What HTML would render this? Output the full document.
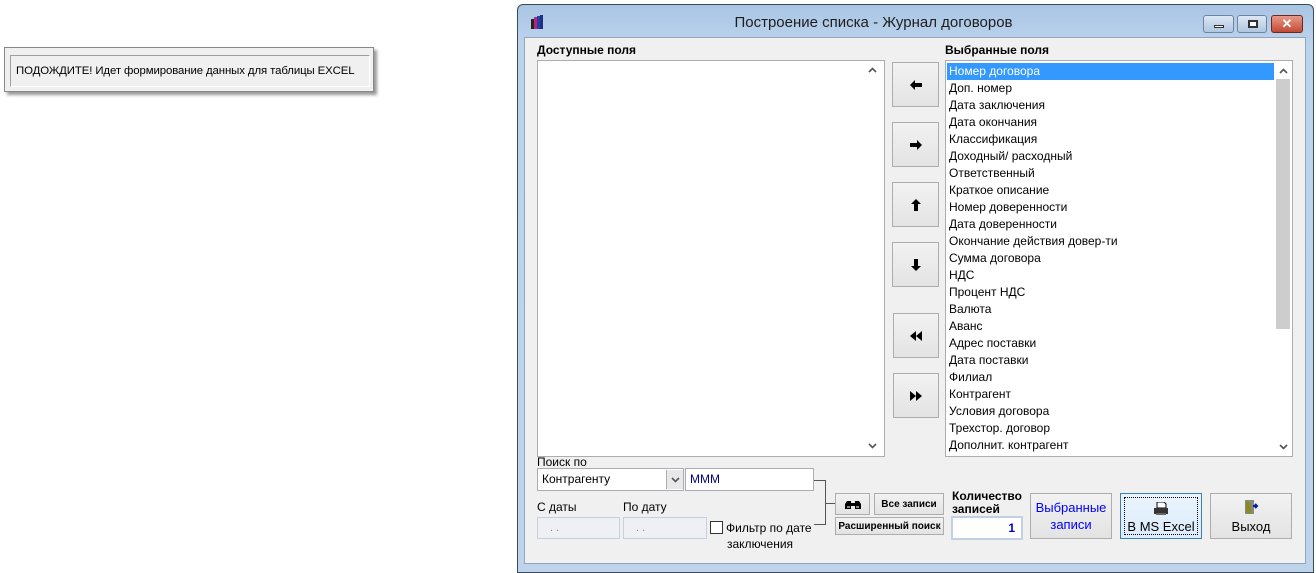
<!DOCTYPE html>
<html><head><meta charset="utf-8"><style>
*{box-sizing:border-box;margin:0;padding:0}
body{width:1316px;height:573px;background:#fff;position:relative;overflow:hidden;font-family:"Liberation Sans",Arial,sans-serif;font-size:12px;color:#000}
.a{position:absolute}
.btn{position:absolute;background:linear-gradient(#f2f2f2,#e3e3e3);border:1px solid #adadad;display:flex;align-items:center;justify-content:center;flex-direction:column;text-align:center}
.lst{position:absolute;background:#fff;border:1px solid #abadb3}
.row{position:absolute;left:3px;height:17px;line-height:17px;font-size:12px;white-space:nowrap}
.inp{position:absolute;background:#fff;border:1px solid #abadb3;padding-left:4px;line-height:20px}
.dis{position:absolute;background:#eef0f3;border:1px solid #c3d0dd;color:#888;line-height:20px;padding-left:12px;font-size:11px}
</style></head><body>

<div class="a" style="left:4px;top:47px;width:370px;height:45px;background:#f0f0f0;border:1px solid #888;box-shadow:3px 3px 3px #999"></div>
<div class="a" style="left:10px;top:55px;width:360px;height:32px;border-top:1px solid #a0a0a0;border-left:1px solid #a0a0a0;border-right:1px solid #fff;border-bottom:1px solid #fff"></div>
<div class="a" style="left:16px;top:65px;font-size:11.4px;letter-spacing:-0.1px">ПОДОЖДИТЕ! Идет формирование данных для таблицы EXCEL</div>

<div class="a" style="left:517px;top:4px;width:797px;height:569px;background:linear-gradient(#a9c5e4,#bcd3ec 40px,#bdd4ec);border:1px solid #3c4b5b;border-radius:6px 6px 0 0"></div>
<div class="a" style="left:524px;top:37px;width:782px;height:527px;background:#f0f0f0;border:1px solid #8ea5bd"></div>
<div class="a" style="left:530px;top:14px;width:14px;height:16px">
<svg width="14" height="16"><rect x="1" y="5" width="3" height="10" fill="#222"/><rect x="4" y="3" width="3" height="12" fill="#c02070"/><rect x="7" y="2" width="3" height="13" fill="#2040b0"/><rect x="10" y="1" width="3" height="14" fill="#203080"/></svg></div>
<div class="a" style="left:517px;top:14px;width:713px;text-align:center;font-size:15px;color:#1e1e1e">Построение списка - Журнал договоров</div>
<div class="a" style="left:1203px;top:15px;width:31px;height:18px;border:1px solid #6d83a0;border-radius:3px;background:linear-gradient(#dce7f4,#b0c6e0)"><div class="a" style="left:10px;top:9px;width:10px;height:3px;background:#fff;border:1px solid #333"></div></div>
<div class="a" style="left:1237px;top:15px;width:30px;height:18px;border:1px solid #6d83a0;border-radius:3px;background:linear-gradient(#dce7f4,#b0c6e0)"><div class="a" style="left:10px;top:4px;width:10px;height:8px;border:2px solid #333;background:#fff"></div></div>
<div class="a" style="left:1271px;top:15px;width:32px;height:18px;border:1px solid #6a2a20;border-radius:3px;background:linear-gradient(#e89a88,#c24a34);color:#fff;font-weight:bold;font-size:13px;text-align:center;line-height:16px">✕</div>

<div class="a" style="left:537px;top:43px;font-weight:bold">Доступные поля</div>
<div class="a" style="left:945px;top:43px;font-weight:bold">Выбранные поля</div>

<div class="lst" style="left:537px;top:60px;width:348px;height:397px"></div>
<svg class="a" style="left:868px;top:67px" width="9" height="6"><path d="M1 5L4.5 1.5L8 5" stroke="#555" stroke-width="1.6" fill="none"/></svg>
<svg class="a" style="left:868px;top:443px" width="9" height="6"><path d="M1 1L4.5 4.5L8 1" stroke="#555" stroke-width="1.6" fill="none"/></svg>

<div class="lst" style="left:945px;top:60px;width:348px;height:397px">
<div class="a" style="left:1px;top:2px;width:327px;height:17px;background:#3399ff"></div>
<div class="a" style="left:330px;top:18px;width:14px;height:250px;background:#cdcdcd"></div>
<svg class="a" style="left:333px;top:7px" width="9" height="6"><path d="M1 5L4.5 1.5L8 5" stroke="#555" stroke-width="1.6" fill="none"/></svg>
<svg class="a" style="left:333px;top:383px" width="9" height="6"><path d="M1 1L4.5 4.5L8 1" stroke="#555" stroke-width="1.6" fill="none"/></svg>
<div class="row" style="top:2px;color:#fff">Номер договора</div>
<div class="row" style="top:19px">Доп. номер</div>
<div class="row" style="top:36px">Дата заключения</div>
<div class="row" style="top:53px">Дата окончания</div>
<div class="row" style="top:70px">Классификация</div>
<div class="row" style="top:87px">Доходный/ расходный</div>
<div class="row" style="top:104px">Ответственный</div>
<div class="row" style="top:121px">Краткое описание</div>
<div class="row" style="top:138px">Номер доверенности</div>
<div class="row" style="top:155px">Дата доверенности</div>
<div class="row" style="top:172px">Окончание действия довер-ти</div>
<div class="row" style="top:189px">Сумма договора</div>
<div class="row" style="top:206px">НДС</div>
<div class="row" style="top:223px">Процент НДС</div>
<div class="row" style="top:240px">Валюта</div>
<div class="row" style="top:257px">Аванс</div>
<div class="row" style="top:274px">Адрес поставки</div>
<div class="row" style="top:291px">Дата поставки</div>
<div class="row" style="top:308px">Филиал</div>
<div class="row" style="top:325px">Контрагент</div>
<div class="row" style="top:342px">Условия договора</div>
<div class="row" style="top:359px">Трехстор. договор</div>
<div class="row" style="top:376px">Дополнит. контрагент</div>
</div>

<div class="btn" style="left:892px;top:62px;width:47px;height:45px"><svg width="12" height="10"><path d="M0 5L5 0V3H12V7H5V10Z" fill="#000"/></svg></div>
<div class="btn" style="left:892px;top:122px;width:47px;height:45px"><svg width="12" height="10"><path d="M12 5L7 0V3H0V7H7V10Z" fill="#000"/></svg></div>
<div class="btn" style="left:892px;top:182px;width:47px;height:45px"><svg width="10" height="12"><path d="M5 0L0 5H3V12H7V5H10Z" fill="#000"/></svg></div>
<div class="btn" style="left:892px;top:242px;width:47px;height:45px"><svg width="10" height="12"><path d="M5 12L0 7H3V0H7V7H10Z" fill="#000"/></svg></div>
<div class="btn" style="left:893px;top:313px;width:46px;height:45px"><svg width="14" height="10"><path d="M7 0L1 5L7 10ZM13 0L7 5L13 10Z" fill="#000"/></svg></div>
<div class="btn" style="left:893px;top:373px;width:46px;height:45px"><svg width="14" height="10"><path d="M1 0L7 5L1 10ZM7 0L13 5L7 10Z" fill="#000"/></svg></div>

<div class="a" style="left:537px;top:455px">Поиск по</div>
<div class="inp" style="left:537px;top:468px;width:147px;height:23px">Контрагенту</div>
<div class="a" style="left:666px;top:470px;width:17px;height:19px;background:#e8e8e8;border-left:1px solid #abadb3"><svg class="a" style="left:4px;top:7px" width="9" height="6"><path d="M1 1L4.5 4.5L8 1" stroke="#555" stroke-width="1.6" fill="none"/></svg></div>
<div class="inp" style="left:685px;top:468px;width:129px;height:23px;color:#000080">МММ</div>

<div class="a" style="left:537px;top:500px">С даты</div>
<div class="a" style="left:623px;top:500px">По дату</div>
<div class="dis" style="left:537px;top:517px;width:83px;height:22px">. .</div>
<div class="dis" style="left:623px;top:517px;width:84px;height:22px">. .</div>
<div class="a" style="left:710px;top:521px;width:13px;height:13px;background:#fff;border:1px solid #333"></div>
<div class="a" style="left:726px;top:520px;line-height:16px">Фильтр по дате<br><span style="padding-left:1px">заключения</span></div>
<div class="a" style="left:814px;top:480px;width:12px;height:45px;border:1px solid #555;border-left:none"></div>
<div class="a" style="left:826px;top:503px;width:9px;height:1px;background:#555"></div>

<div class="btn" style="left:835px;top:493px;width:35px;height:22px"><svg width="16" height="12"><path d="M2 3h4v8H0V6ZM10 3h4l2 3v5h-6ZM6 5h4v3H6Z" fill="#000"/><rect x="2" y="8" width="3" height="2" fill="#888"/><rect x="11" y="8" width="3" height="2" fill="#888"/></svg></div>
<div class="btn" style="left:874px;top:493px;width:70px;height:22px;font-size:10px;font-weight:bold">Все записи</div>
<div class="btn" style="left:835px;top:517px;width:109px;height:18px;font-size:10px;font-weight:bold">Расширенный поиск</div>

<div class="a" style="left:952px;top:490px;font-weight:bold;line-height:13px">Количество<br>записей</div>
<div class="a" style="left:951px;top:516px;width:72px;height:24px;background:#fff;border:2px solid #c3d0e3;text-align:right;padding-right:6px;line-height:20px;color:#0000c0;font-weight:bold">1</div>

<div class="btn" style="left:1030px;top:493px;width:82px;height:46px;color:#0000ff;font-size:13px;line-height:17px">Выбранные<br>записи</div>
<div class="btn" style="left:1120px;top:493px;width:82px;height:46px;background:linear-gradient(#eaf4fc,#dcecfc);border-color:#3c7fb1">
<div class="a" style="left:3px;top:3px;right:3px;bottom:3px;border:1px dotted #000"></div>
<svg width="16" height="14" style="margin-top:4px"><path d="M4 0h7l2 2v4H4Z" fill="#fff" stroke="#000"/><path d="M1 6h14v6H1Z" fill="#333"/><rect x="3" y="11" width="10" height="2" fill="#666"/></svg><span style="font-size:13px;margin-top:3px">В MS Excel</span></div>
<div class="btn" style="left:1210px;top:493px;width:82px;height:46px">
<svg width="16" height="16"><rect x="2" y="1" width="9" height="14" fill="#888"/><path d="M3 2L8 4L8 15L3 14Z" fill="#8a8a20"/><path d="M10 7h4M12 5l2 2-2 2" stroke="#0020a0" stroke-width="2" fill="none"/></svg>
<span style="font-size:13px;margin-top:4px">Выход</span></div>
</body></html>
